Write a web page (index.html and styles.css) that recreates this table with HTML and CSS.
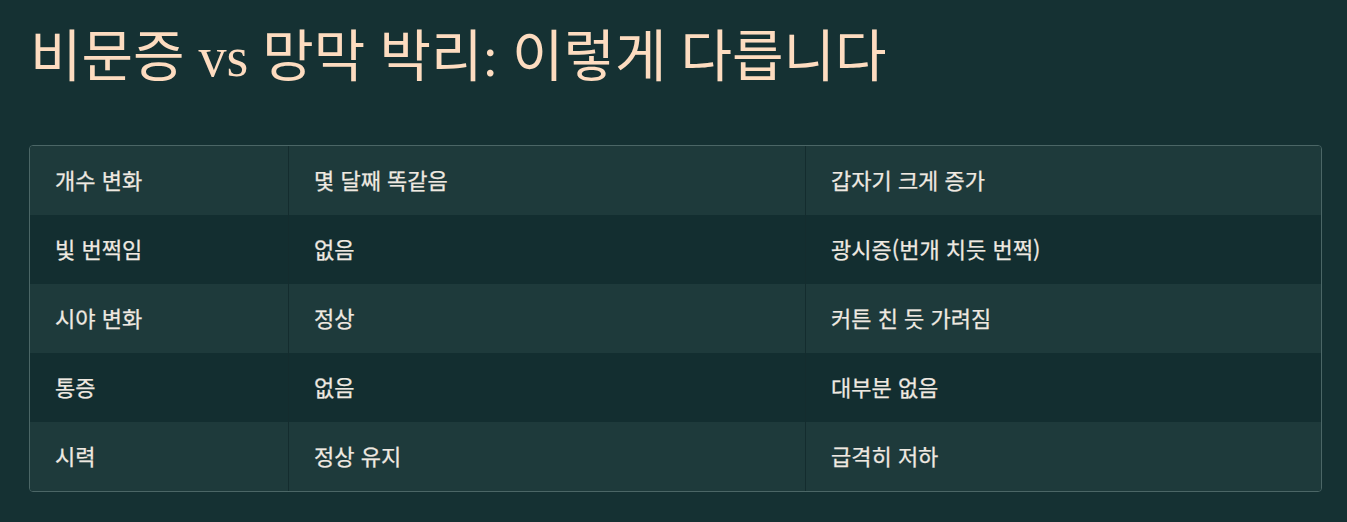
FILE: index.html
```html
<!DOCTYPE html>
<html lang="ko">
<head>
<meta charset="utf-8">
<link rel="stylesheet" href="styles.css">
</head>
<body>
<main class="page">
  <h1 class="title">비문증 vs 망막 박리: 이렇게 다릅니다</h1>
  <div class="table-wrap">
    <table class="compare">
      <tbody>
        <tr><td>개수 변화</td><td>몇 달째 똑같음</td><td>갑자기 크게 증가</td></tr>
        <tr><td>빛 번쩍임</td><td>없음</td><td>광시증(번개 치듯 번쩍)</td></tr>
        <tr><td>시야 변화</td><td>정상</td><td>커튼 친 듯 가려짐</td></tr>
        <tr><td>통증</td><td>없음</td><td>대부분 없음</td></tr>
        <tr><td>시력</td><td>정상 유지</td><td>급격히 저하</td></tr>
      </tbody>
    </table>
  </div>
</main>
</body>
</html>
```

FILE: styles.css
```css
html, body {
  margin: 0;
  padding: 0;
  background: #153133;
}
.page {
  padding: 17px 25px 30px 29px;
}
.title {
  margin: 0 0 0 1px;
  font-family: "Liberation Serif", "Noto Sans CJK KR", serif;
  font-weight: 400;
  font-size: 56px;
  line-height: 80px;
  color: #fddcc0;
}
.table-wrap {
  margin-top: 48px;
  border: 1px solid #4b6666;
  border-radius: 4px;
  overflow: hidden;
}
.compare {
  width: 100%;
  border-collapse: collapse;
  font-family: "Noto Sans CJK KR", "Noto Sans", sans-serif;
  font-size: 22px;
  font-weight: 400;
  -webkit-text-stroke: 0.25px currentColor;
  color: #efe9e1;
}
.compare td {
  padding: 21px 25px 23px 25px;
  line-height: 25px;
  border-left: 1px solid #142c2e;
  vertical-align: middle;
}
.compare td:first-child {
  border-left: none;
  width: 208px;
}
.compare td:nth-child(2) {
  width: 466px;
}
.compare tr:nth-child(odd) {
  background: #1e3a3b;
}
.compare tr:nth-child(even) {
  background: #132e30;
}
```
